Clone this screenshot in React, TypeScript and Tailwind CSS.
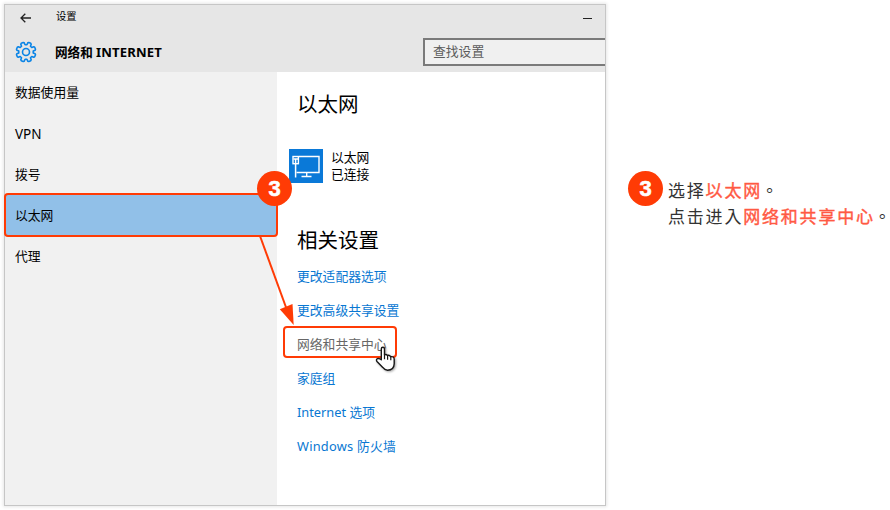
import React from "react";

const uiFont = "font-['Noto_Sans','Noto_Sans_CJK_SC',sans-serif]";

const gearPath = (() => {
  const teeth = 8;
  const profile: [number, number][] = [
    [-0.4, 7.3],
    [-0.3, 9.3],
    [-0.16, 9.9],
    [0.16, 9.9],
    [0.3, 9.3],
    [0.4, 7.3],
  ];
  const points: string[] = [];
  for (let i = 0; i < teeth; i++) {
    for (const [offset, radius] of profile) {
      const angle = ((i + 0.5 + offset * 0.85) / teeth) * Math.PI * 2;
      points.push(
        `${(11 + radius * Math.cos(angle)).toFixed(2)} ${(11 + radius * Math.sin(angle)).toFixed(2)}`,
      );
    }
  }
  return `M${points.join("L")}Z`;
})();

function GearIcon() {
  return (
    <svg width="22" height="22" viewBox="0 0 22 22" fill="none" stroke="#0a84e6" strokeWidth="1.6" strokeLinejoin="round">
      <path d={gearPath} />
      <circle cx="11" cy="11" r="3.5" />
    </svg>
  );
}

function EthernetIcon() {
  return (
    <svg className="shrink-0" width="34" height="34" viewBox="0 0 34 34" fill="none" stroke="#ffffff">
      <rect width="34" height="34" fill="#0a79d8" stroke="none" />
      <path d="M10 7.5H30V23.5H7.5" strokeWidth="1.4" />
      <path d="M17.7 23.5V27M12.5 27.5H22.5" strokeWidth="1.4" />
      <rect x="4" y="7.5" width="5.4" height="7.2" strokeWidth="1.4" />
      <path d="M4.5 10H9M6.6 10V28.5" strokeWidth="1.5" />
    </svg>
  );
}

function StepBadge() {
  return (
    <div className="flex h-[35px] w-[35px] shrink-0 items-center justify-center rounded-full bg-[#ff3b05] font-['Liberation_Sans',sans-serif] text-[22px] font-bold leading-none text-white">
      <span className="[-webkit-text-stroke:0.6px_white]">3</span>
    </div>
  );
}

function Callouts() {
  return (
    <>
      <div className="absolute left-[4px] top-[193px] h-[44px] w-[274px] rounded-[4px] border-2 border-[#ff3b05]" />
      <svg className="absolute left-[255px] top-[234px]" width="50" height="95" viewBox="0 0 50 95">
        <path d="M5 2L32 76" stroke="#ff3b05" strokeWidth="2" />
        <path d="M38.700 91L24.800 75.300L37.500 70Z" fill="#ff3b05" />
      </svg>
      <div className="absolute left-[283px] top-[326px] h-[32px] w-[114px] rounded-[4px] border-2 border-[#ff3b05]" />
      <div className="absolute left-[257px] top-[171px]">
        <StepBadge />
      </div>
      <svg className="absolute left-[374px] top-[344px] drop-shadow-[1px_1px_1px_rgba(0,0,0,0.35)]" width="24" height="28" viewBox="0 0 24 28">
        <path
          d="M7.300 15.800V5Q7.300 3.300 8.900 3.300Q10.500 3.300 10.500 5V10.800Q12.400 9.900 13.400 11.500Q15.500 10.700 16.600 12.700Q19.900 12.200 20.200 15V19.800Q20 26.200 13.500 26.200Q10.700 26.200 8.800 23.400L3 17.500Q1.700 15.700 3.500 14.700Q5.200 13.900 7.300 15.800Z"
          fill="white"
          stroke="#161616"
          strokeWidth="1.4"
          strokeLinejoin="round"
        />
        <path d="M10.500 10.500V15.200M13.600 11.500V15.700M16.800 12.500V16.200" fill="none" stroke="#161616" strokeWidth="1.200" />
      </svg>
    </>
  );
}

const sections = ["数据使用量", "VPN", "拨号", "以太网", "代理"];
const links = ["更改适配器选项", "更改高级共享设置", "网络和共享中心", "家庭组", "Internet 选项", "Windows 防火墙"];

function SettingsWindow() {
  return (
    <div className={`flex h-[502px] w-[602px] shrink-0 flex-col overflow-hidden border border-[#c6c6c6] bg-white text-[12.8px] text-black shadow-[0_0_3px_1px_#e7e7e7] ${uiFont}`}>
      <header className="h-[67px] shrink-0 bg-[#e6e6e6]">
        <div className="flex h-[25px] items-center pl-[15px]">
          <svg width="12" height="10" viewBox="0 0 12 10" fill="none" stroke="#222" strokeWidth="1.300">
            <path d="M11 5H1M5.300.7L1 5L5.300 9.300" />
          </svg>
          <span className="mb-[2px] ml-[24px] text-[10.300px] leading-[23px]">设置</span>
          <div className="ml-auto mr-[13px] mt-[2px] h-[1.500px] w-[9px] bg-[#222]" />
        </div>
        <div className="flex h-[42px] items-start">
          <div className="ml-[9.500px] mt-[11px]">
            <GearIcon />
          </div>
          <h1 className="ml-[18.500px] mt-[12px] whitespace-nowrap text-[12.600px] font-bold leading-[20px]">
            网络和 <span className="text-[13.100px] tracking-[0.150px]">INTERNET</span>
          </h1>
          <div className="ml-auto mt-[8px] h-[28px] w-[182px] border-2 border-r-0 border-[#7a7a7a] bg-[#f0f0f0] pl-[8px] leading-[23px] text-[#5c5c5c]">
            查找设置
          </div>
        </div>
      </header>
      <div className="flex min-h-0 flex-1">
        <nav className="w-[272px] shrink-0 bg-[#f1f1f1]">
          {sections.map((name) => (
            <div
              key={name}
              className={`flex h-[40.800px] items-center pl-[10px] leading-[20px] ${name === "以太网" ? "bg-[#91c0e8]" : ""} ${name === "VPN" ? "pt-[1px] text-[13.500px]" : ""}`}
            >
              {name}
            </div>
          ))}
        </nav>
        <main className="flex-1 whitespace-nowrap bg-white pl-[12px]">
          <h2 className="ml-[8px] mt-[17px] text-[20.500px] leading-[30px]">以太网</h2>
          <div className="mt-[30px] flex h-[34px] items-center">
            <EthernetIcon />
            <div className="ml-[8px] leading-[17px]">
              <div>以太网</div>
              <div>已连接</div>
            </div>
          </div>
          <h2 className="ml-[8px] mt-[42px] text-[20.500px] leading-[30px]">相关设置</h2>
          <div className="ml-[8px] mt-[4px]">
            {links.map((name) => (
              <a
                key={name}
                className={`block h-[34px] leading-[34px] ${name === "网络和共享中心" ? "text-[#666]" : "text-[#0877d2]"} ${name.startsWith("Windows") ? "tracking-[0.250px]" : ""}`}
              >
                {name}
              </a>
            ))}
          </div>
        </main>
      </div>
    </div>
  );
}

export default function App() {
  return (
    <div className="relative flex h-[510px] w-[890px] overflow-hidden bg-white pl-[4px] pt-[4px]">
      <SettingsWindow />
      <div className="ml-[22px] mt-[167px] flex items-start">
        <StepBadge />
        <div className="ml-[5px] mt-[6px] whitespace-nowrap font-['Noto_Sans_CJK_TC',sans-serif] text-[17px] leading-[26px] tracking-[1.800px] text-[#333]">
          <p>
            选择<span className="text-[#ff5943] [-webkit-text-stroke:0.4px_#ff5943]">以太网</span>
            <span className="-ml-[1px] tracking-normal">。</span>
          </p>
          <p>
            点击进入<span className="text-[#ff5943] [-webkit-text-stroke:0.4px_#ff5943]">网络和共享中心</span>
            <span className="-ml-[1px] tracking-normal">。</span>
          </p>
        </div>
      </div>
      <Callouts />
    </div>
  );
}
